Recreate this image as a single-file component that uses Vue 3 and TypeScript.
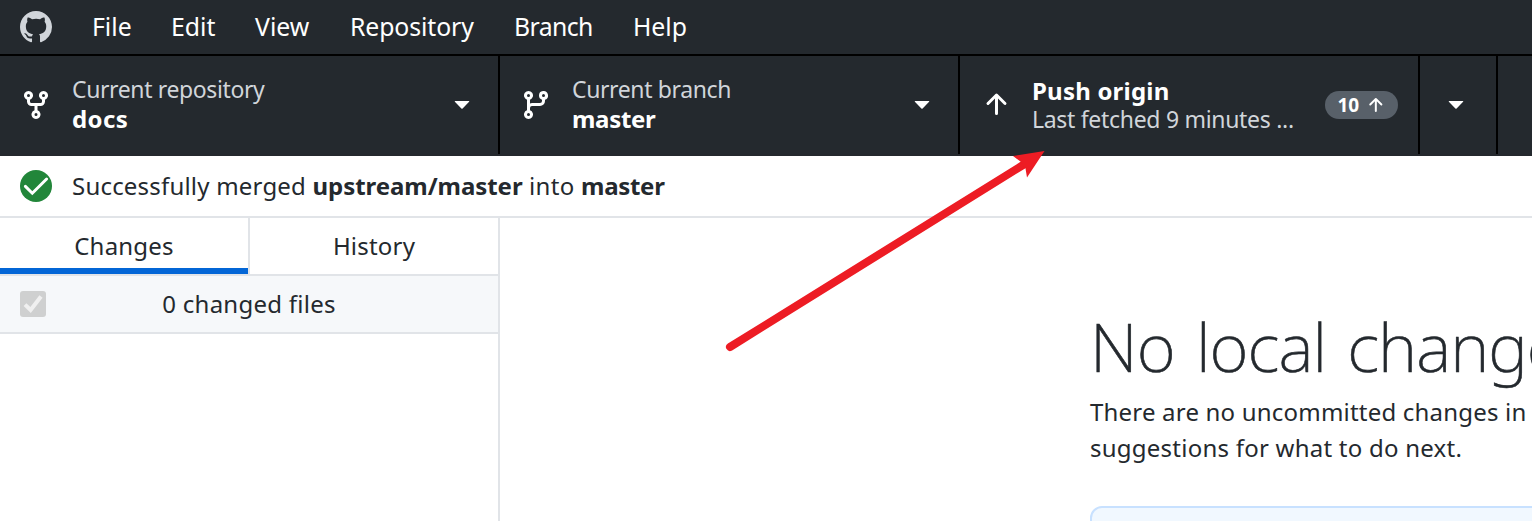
<script setup lang="ts">
const menuItems: { label: string; cls: string }[] = [
  { label: 'File', cls: 'm-file' },
  { label: 'Edit', cls: 'm-edit' },
  { label: 'View', cls: 'm-view' },
  { label: 'Repository', cls: 'm-repository' },
  { label: 'Branch', cls: 'm-branch' },
  { label: 'Help', cls: 'm-help' },
]
const caret =
  'M4.427 7.427l3.396 3.396a.25.25 0 00.354 0l3.396-3.396A.25.25 0 0011.396 7H4.604a.25.25 0 00-.177.427z'
const arrowUp =
  'M3.47 7.78a.75.75 0 010-1.06l4.25-4.25a.75.75 0 011.06 0l4.25 4.25a.75.75 0 01-1.06 1.06L9 4.81v7.44a.75.75 0 01-1.5 0V4.81L4.53 7.78a.75.75 0 01-1.06 0z'
</script>

<template>
  <div class="app">
    <nav class="menubar">
      <svg class="mark" viewBox="0 0 16 16">
        <path fill-rule="evenodd" d="M8 0C3.58 0 0 3.58 0 8c0 3.54 2.29 6.53 5.47 7.59.4.07.55-.17.55-.38 0-.19-.01-.82-.01-1.49-2.01.37-2.53-.49-2.69-.94-.09-.23-.48-.94-.82-1.13-.28-.15-.68-.52-.01-.53.63-.01 1.08.58 1.23.82.72 1.21 1.87.87 2.33.66.07-.52.28-.87.51-1.07-1.78-.2-3.64-.89-3.64-3.95 0-.87.31-1.59.82-2.15-.08-.2-.36-1.02.08-2.12 0 0 .67-.21 2.2.82.64-.18 1.32-.27 2-.27.68 0 1.36.09 2 .27 1.53-1.04 2.2-.82 2.2-.82.44 1.1.16 1.92.08 2.12.51.56.82 1.27.82 2.15 0 3.07-1.87 3.75-3.65 3.95.29.25.54.73.54 1.48 0 1.07-.01 1.93-.01 2.2 0 .21.15.46.55.38A8.013 8.013 0 0016 8c0-4.42-3.58-8-8-8z" />
      </svg>
      <span v-for="item in menuItems" :key="item.label" class="menu-item" :class="item.cls">{{ item.label }}</span>
    </nav>

    <header class="toolbar">
      <div class="section repo">
        <svg class="icon" viewBox="0 0 16 16">
          <path fill-rule="evenodd" d="M5 3.25a.75.75 0 11-1.5 0 .75.75 0 011.5 0zm0 2.122a2.25 2.25 0 10-1.5 0v.878A2.25 2.25 0 005.75 8.5h1.5v2.128a2.251 2.251 0 101.5 0V8.5h1.5a2.25 2.25 0 002.25-2.25v-.878a2.25 2.25 0 10-1.5 0v.878a.75.75 0 01-.75.75h-4.5A.75.75 0 015 6.25v-.878zm3.75 7.378a.75.75 0 11-1.5 0 .75.75 0 011.5 0zm3-8.75a.75.75 0 100-1.5.75.75 0 000 1.5z" />
        </svg>
        <div class="labels">
          <span class="sub">Current repository</span>
          <span class="main docs">docs</span>
        </div>
        <svg class="icon caret" viewBox="0 0 16 16"><path :d="caret" /></svg>
      </div>
      <div class="section branch">
        <svg class="icon" viewBox="0 0 16 16">
          <path fill-rule="evenodd" d="M11.75 2.5a.75.75 0 100 1.5.75.75 0 000-1.5zm-2.25.75a2.25 2.25 0 113 2.122V6A2.5 2.5 0 0110 8.5H6a1 1 0 00-1 1v1.128a2.251 2.251 0 11-1.5 0V5.372a2.25 2.25 0 111.5 0v1.836A2.492 2.492 0 016 7h4a1 1 0 001-1v-.628A2.25 2.25 0 019.5 3.25zM4.25 12a.75.75 0 100 1.5.75.75 0 000-1.5zM3.5 3.25a.75.75 0 111.5 0 .75.75 0 01-1.5 0z" />
        </svg>
        <div class="labels">
          <span class="sub">Current branch</span>
          <span class="main master">master</span>
        </div>
        <svg class="icon caret" viewBox="0 0 16 16"><path :d="caret" /></svg>
      </div>
      <div class="section push">
        <svg class="icon" viewBox="0 0 16 16"><path :d="arrowUp" /></svg>
        <div class="labels push-labels">
          <span class="main push-title">Push origin</span>
          <span class="sub fetched">Last fetched 9 minutes ...</span>
        </div>
        <div class="pill">
          <span class="count">10</span>
          <svg class="pill-arrow" viewBox="0 0 16 16"><path :d="arrowUp" /></svg>
        </div>
      </div>
      <div class="section more">
        <svg class="icon caret" viewBox="0 0 16 16"><path :d="caret" /></svg>
      </div>
    </header>

    <div class="banner">
      <svg class="ok" viewBox="0 0 32 32">
        <circle cx="16" cy="16" r="16" />
        <path d="M5.4 16.4L12.3 23.2L26.6 9" />
      </svg>
      <p class="banner-text">
        <span class="b1">Successfully merged </span><strong class="b2">upstream/master</strong><span class="b3"> into </span><strong class="b4">master</strong>
      </p>
    </div>

    <main class="body">
      <aside class="sidebar">
        <div class="tabs">
          <div class="tab active"><span>Changes</span></div>
          <div class="tab"><span>History</span></div>
        </div>
        <div class="files">
          <svg class="checkbox" viewBox="0 0 26 26">
            <rect width="26" height="26" rx="3" />
            <path d="M5 13.6L10.6 19L21 5.6" />
          </svg>
          <span class="files-label">0 changed files</span>
        </div>
      </aside>
      <section class="content">
        <h1>No local changes</h1>
        <p class="desc"><span class="d1">There are no uncommitted changes in</span><br /><span class="d2">suggestions for what to do next.</span></p>
        <div class="card"></div>
      </section>
    </main>

    <svg class="pointer" viewBox="0 0 1532 521">
      <path class="shaft" d="M730 347L1023 165" />
      <path class="head" d="M1044.5 151L1013 156L1020.5 161.5L1025.5 168.5L1027 177.5Z" />
    </svg>
  </div>
</template>

<style>
body {
  overflow: hidden;
}
</style>

<style scoped>
.app {
  position: relative;
  display: flex;
  flex-direction: column;
  width: 1532px;
  height: 521px;
  overflow: hidden;
  background: #fff;
  color: #24292e;
  font-family: "Noto Sans", "Open Sans", sans-serif;
  font-size: 24px;
  white-space: nowrap;
}
.app * {
  box-sizing: border-box;
}
.menubar {
  display: flex;
  align-items: center;
  flex: none;
  height: 56px;
  padding-left: 20px;
  background: #24292e;
  border-bottom: 2px solid #000;
  color: #fff;
  font-size: 24.8px;
}
.mark {
  width: 32px;
  height: 32px;
  margin-right: 20px;
  fill: #d1d5da;
}
.menu-item {
  padding-left: 20px;
  height: 54px;
  line-height: 53px;
}
.m-file { width: 79px; }
.m-edit { width: 84px; }
.m-view { width: 95px; }
.m-repository { width: 164px; letter-spacing: -0.1px; }
.m-branch { width: 119px; letter-spacing: -0.6px; }
.toolbar {
  display: flex;
  flex: none;
  height: 100px;
  background: #24292e;
  border-bottom: 2px solid #24282d;
  color: #fff;
}
.section {
  display: flex;
  align-items: center;
  height: 98px;
  border-right: 2px solid #000;
  padding-left: 20px;
}
.repo { width: 500px; }
.branch,
.push { width: 460px; }
.more { width: 78px; }
.icon {
  flex: none;
  width: 32px;
  height: 32px;
  fill: #fff;
}
.labels {
  display: flex;
  flex-direction: column;
  flex: 1;
  margin-left: 20px;
  padding-bottom: 2px;
  line-height: 29px;
}
.push-labels {
  line-height: 28px;
  padding: 0;
}
.sub {
  color: #d1d5da;
  font-size: 23px;
  letter-spacing: -0.38px;
}
.fetched {
  letter-spacing: -0.3px;
}
.main {
  font-size: 24px;
  font-weight: 700;
}
.docs { letter-spacing: 0.4px; }
.master { letter-spacing: -0.3px; }
.push-title { letter-spacing: 0.2px; }
.caret {
  margin: 0 20px 4px 0;
}
.pill {
  display: flex;
  align-items: center;
  width: 73px;
  height: 28px;
  margin-right: 20px;
  padding-left: 12.5px;
  border-radius: 14px;
  background: #586069;
}
.count {
  width: 27.5px;
  font-size: 19px;
  line-height: 28px;
  font-weight: 700;
}
.pill-arrow {
  width: 21px;
  height: 21px;
  fill: #fff;
}
.banner {
  display: flex;
  align-items: center;
  flex: none;
  height: 62px;
  padding-left: 20px;
  border-bottom: 2px solid #e1e4e8;
}
.ok {
  width: 32px;
  height: 32px;
  margin-right: 20px;
}
.ok circle { fill: #22863a; }
.ok path {
  fill: none;
  stroke: #fff;
  stroke-width: 3;
  stroke-linecap: round;
}
.banner-text {
  margin: 0;
  padding-bottom: 2px;
  white-space: pre;
}
.b1 { letter-spacing: 0.2px; }
.b2 { letter-spacing: -0.05px; }
.b3 { letter-spacing: 0.3px; }
.b4 { letter-spacing: -0.3px; }
.body {
  display: flex;
  flex: 1;
  min-height: 0;
}
.sidebar {
  flex: none;
  width: 500px;
  border-right: 2px solid #e1e4e8;
}
.tabs {
  display: flex;
  height: 58px;
  border-bottom: 2px solid #e1e4e8;
}
.tab {
  flex: 1;
  text-align: center;
  line-height: 56px;
  letter-spacing: 0.2px;
}
.tab.active {
  flex: none;
  width: 250px;
  border-right: 2px solid #e1e4e8;
  box-shadow: inset 0 -6px #0366d6;
}
.files {
  display: flex;
  align-items: center;
  height: 58px;
  padding-left: 20px;
  background: #f6f8fa;
  border-bottom: 2px solid #e1e4e8;
}
.checkbox {
  width: 26px;
  height: 26px;
}
.checkbox rect { fill: #cfd0d0; }
.checkbox path {
  fill: none;
  stroke: #f0f0f0;
  stroke-width: 4;
}
.files-label {
  flex: 1;
  padding-right: 46px;
  padding-bottom: 2px;
  text-align: center;
  letter-spacing: 0.25px;
}
.content {
  flex: 1;
  min-width: 0;
  padding: 92px 0 0 590px;
}
h1 {
  margin: 0;
  height: 84px;
  line-height: 72px;
  font-size: 67px;
  font-weight: 200;
  letter-spacing: -0.9px;
  word-spacing: 4.6px;
  -webkit-text-stroke: 0.6px #24292e;
}
.desc {
  margin: 0;
  line-height: 36px;
}
.d1 { letter-spacing: 0.2px; }
.d2 { letter-spacing: 0.24px; }
.card {
  width: 600px;
  height: 120px;
  margin-top: 40px;
  border: 2px solid #c8e1ff;
  border-radius: 12px;
  background: #f1f8ff;
}
.pointer {
  position: absolute;
  inset: 0;
  width: 1532px;
  height: 521px;
  pointer-events: none;
}
.shaft {
  fill: none;
  stroke: #ed1c24;
  stroke-width: 8;
  stroke-linecap: round;
}
.head { fill: #ed1c24; }
</style>
